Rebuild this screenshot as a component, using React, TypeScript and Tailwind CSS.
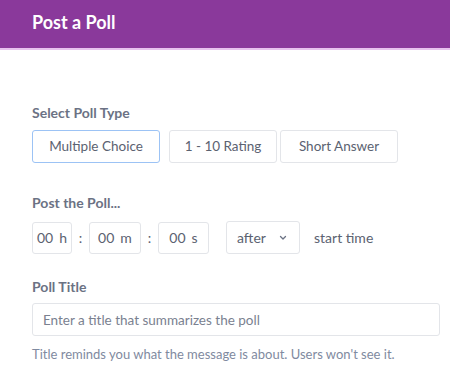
import React, { useState } from 'react';

const font = { fontFamily: 'Lato, "Open Sans", sans-serif' };

const PollTypeButton: React.FC<{ label: string; active?: boolean; width: string; onClick: () => void }> = ({ label, active, width, onClick }) => (
  <button
    onClick={onClick}
    className={`${width} h-[33px] rounded-[3px] border bg-white text-[13.5px] text-[#5b6271] ${
      active ? 'border-[#9cc3f5]' : 'border-[#e3e5e9]'
    }`}
  >
    {label}
  </button>
);

const TimeBox: React.FC<{ unit: string; width: string }> = ({ unit, width }) => (
  <div className={`${width} h-[32px] rounded-[3px] border border-[#e3e5e9] flex items-center justify-center gap-[6px] text-[14px] text-[#5b6271]`}>
    <span>00</span>
    <span>{unit}</span>
  </div>
);

export default function App() {
  const [pollType, setPollType] = useState('multiple');

  return (
    <div className="w-[450px] h-[370px] bg-white overflow-hidden" style={font}>
      <div className="h-[50px] bg-[#8a399b] border-b-2 border-[#e7c2ee] flex items-center px-8">
        <h1 className="text-[18px] font-bold text-white -mt-[3px]">Post a Poll</h1>
      </div>

      <div className="px-8 pt-[53px]">
        <div className="text-[14px] font-bold text-[#6b7284] leading-[20px]">Select Poll Type</div>
        <div className="flex mt-[7px]">
          <PollTypeButton label="Multiple Choice" width="w-[128px]" active={pollType === 'multiple'} onClick={() => setPollType('multiple')} />
          <div className="w-[9px]" />
          <PollTypeButton label="1 - 10 Rating" width="w-[108px]" active={pollType === 'rating'} onClick={() => setPollType('rating')} />
          <div className="w-[3px]" />
          <PollTypeButton label="Short Answer" width="w-[118px]" active={pollType === 'short'} onClick={() => setPollType('short')} />
        </div>

        <div className="text-[14px] font-bold text-[#6b7284] leading-[20px] mt-[30px]">Post the Poll...</div>
        <div className="flex items-center mt-[8px]">
          <TimeBox unit="h" width="w-[40px]" />
          <span className="w-[17px] text-center text-[14px] text-[#5b6271]">:</span>
          <TimeBox unit="m" width="w-[52px]" />
          <span className="w-[17px] text-center text-[14px] text-[#5b6271]">:</span>
          <TimeBox unit="s" width="w-[51px]" />
          <div className="ml-[17px] w-[74px] h-[33px] rounded-[3px] border border-[#e3e5e9] flex items-center justify-between pl-[10px] pr-[12px] text-[14px] text-[#5b6271]">
            <span>after</span>
            <svg width="8" height="6" viewBox="0 0 8 6" fill="none">
              <path d="M1.5 1.5 L4 4 L6.5 1.5" stroke="#6b7284" strokeWidth="1.3" strokeLinecap="round" strokeLinejoin="round" />
            </svg>
          </div>
          <span className="ml-[14px] text-[14px] text-[#5b6271]">start time</span>
        </div>

        <div className="text-[14px] font-bold text-[#6b7284] leading-[20px] mt-[23px]">Poll Title</div>
        <input
          className="block mt-[6px] w-[408px] h-[33px] rounded-[3px] border border-[#e3e5e9] px-[10px] text-[13.5px] text-[#5b6271] placeholder:text-[#7a8190] outline-none"
          placeholder="Enter a title that summarizes the poll"
        />
        <div className="mt-[9px] text-[13px] text-[#7f8aa0] leading-[18px]">
          Title reminds you what the message is about. Users won't see it.
        </div>
      </div>
    </div>
  );
}
